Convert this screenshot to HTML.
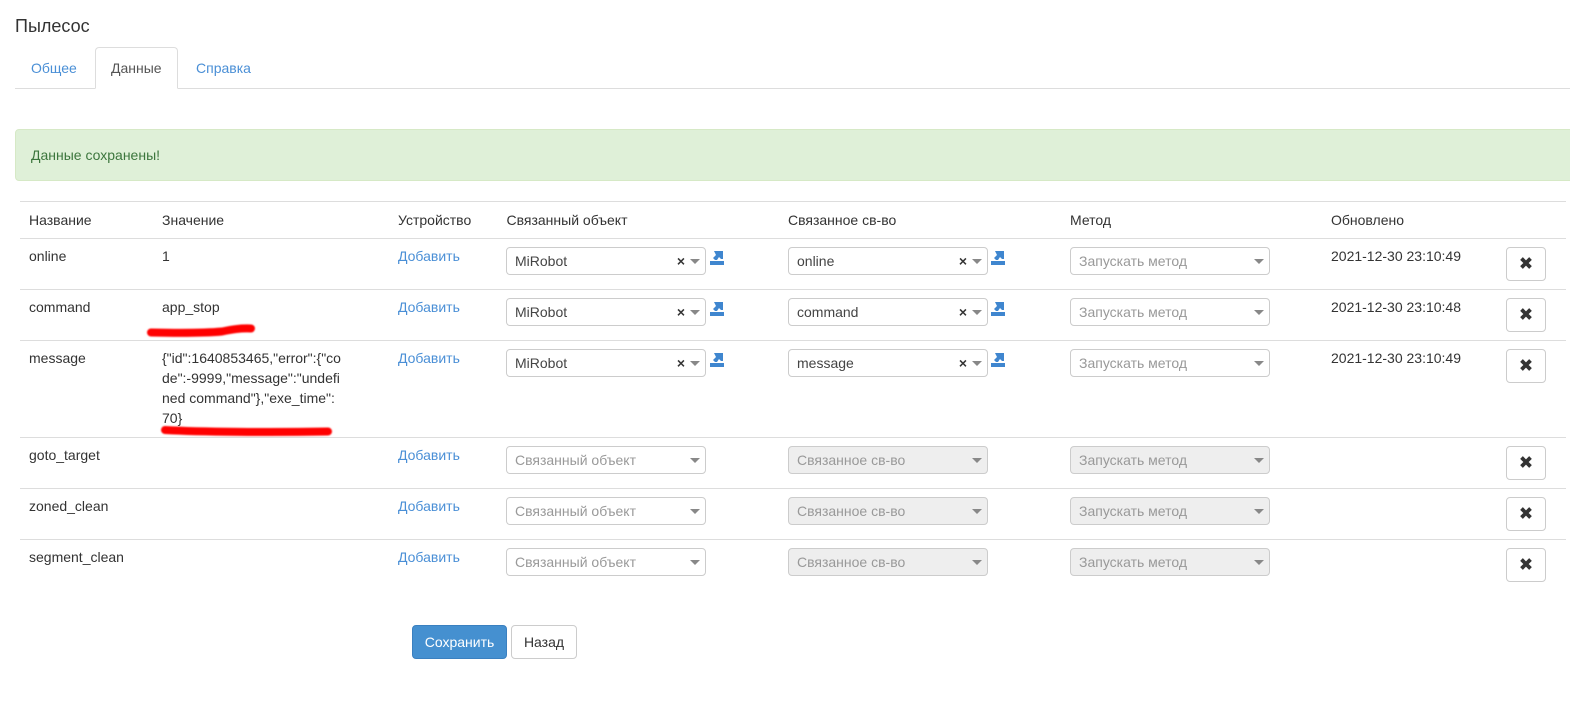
<!DOCTYPE html>
<html lang="ru">
<head>
<meta charset="utf-8">
<title>Пылесос</title>
<style>
html,body{margin:0;padding:0;background:#fff}
body{position:relative;width:1570px;height:726px;overflow:hidden;font-family:"Liberation Sans","Noto Sans CJK SC",sans-serif;font-size:14px;line-height:20px;color:#333}
.t{position:absolute;white-space:nowrap}
.a{color:#4a8fd6}
.l{position:absolute;left:20px;width:1546px;height:1px;background:#ddd}
.s{position:absolute;height:26px;border:1px solid #ccc;border-radius:4px;background:#fff;line-height:27px;padding-left:8px;box-sizing:content-box;width:190px;color:#444}
.s.p{color:#999}
.s.d{background:#eee;color:#999}
.s:after{content:"";position:absolute;right:5px;top:11px;border-left:5px solid transparent;border-right:5px solid transparent;border-top:5px solid #888}
.s i{position:absolute;right:20px;top:0;font-style:normal;font-weight:bold;font-size:14px;color:#333}
.x{position:absolute;left:1506px;width:38px;height:32px;border:1px solid #ccc;border-radius:4px;background:#fff}
.x svg{position:absolute;left:13px;top:9px}
.ic{position:absolute}
</style>
</head>
<body>
<div class="t" style="left:15px;top:16px;font-size:18px;color:#333">Пылесос</div>

<div style="position:absolute;left:15px;top:88px;width:1555px;height:1px;background:#ddd"></div>
<div style="position:absolute;left:95px;top:47px;width:81px;height:40px;border:1px solid #ddd;border-bottom:1px solid #fff;border-radius:4px 4px 0 0;background:#fff"></div>
<div class="t a" style="left:31px;top:58px">Общее</div>
<div class="t" style="left:111px;top:58px;color:#555">Данные</div>
<div class="t a" style="left:196px;top:58px">Справка</div>

<div style="position:absolute;left:15px;top:129px;width:1565px;height:50px;background:#dff0d8;border:1px solid #d6e9c6;border-radius:4px"></div>
<div class="t" style="left:31px;top:145px;color:#3c763d">Данные сохранены!</div>

<div class="l" style="top:201px"></div>
<div class="l" style="top:238px"></div>
<div class="l" style="top:289px"></div>
<div class="l" style="top:340px"></div>
<div class="l" style="top:437px"></div>
<div class="l" style="top:488px"></div>
<div class="l" style="top:539px"></div>

<div class="t" style="left:29px;top:210px">Название</div>
<div class="t" style="left:162px;top:210px">Значение</div>
<div class="t" style="left:398px;top:210px">Устройство</div>
<div class="t" style="left:506.500px;top:210px">Связанный объект</div>
<div class="t" style="left:788px;top:210px">Связанное св-во</div>
<div class="t" style="left:1070px;top:210px">Метод</div>
<div class="t" style="left:1331px;top:210px">Обновлено</div>

<div class="t" style="left:29px;top:246px">online</div>
<div class="t" style="left:162px;top:246px">1</div>
<div class="t a" style="left:398px;top:246px">Добавить</div>
<div class="s" style="left:506px;top:247px">MiRobot<i>×</i></div>
<svg class="ic" style="left:710px;top:251px" width="14" height="14" viewBox="0 0 14 14"><path fill="#3f86cf" d="M0 10h14v4H0zM4 0h9v8H11L9 6 7 9H5L3 7 6 4z"/></svg>
<div class="s" style="left:788px;top:247px">online<i>×</i></div>
<svg class="ic" style="left:991px;top:251px" width="14" height="14" viewBox="0 0 14 14"><path fill="#3f86cf" d="M0 10h14v4H0zM4 0h9v8H11L9 6 7 9H5L3 7 6 4z"/></svg>
<div class="s p" style="left:1070px;top:247px">Запускать метод</div>
<div class="t" style="left:1331px;top:246px">2021-12-30 23:10:49</div>
<div class="x" style="top:247px"><svg width="12" height="12" viewBox="0 0 12 12"><path stroke="#333" stroke-width="3.800" d="M1.500 1.500l9 9M10.500 1.500l-9 9"/></svg></div>

<div class="t" style="left:29px;top:297px">command</div>
<div class="t" style="left:162px;top:297px">app_stop</div>
<div class="t a" style="left:398px;top:297px">Добавить</div>
<div class="s" style="left:506px;top:298px">MiRobot<i>×</i></div>
<svg class="ic" style="left:710px;top:302px" width="14" height="14" viewBox="0 0 14 14"><path fill="#3f86cf" d="M0 10h14v4H0zM4 0h9v8H11L9 6 7 9H5L3 7 6 4z"/></svg>
<div class="s" style="left:788px;top:298px">command<i>×</i></div>
<svg class="ic" style="left:991px;top:302px" width="14" height="14" viewBox="0 0 14 14"><path fill="#3f86cf" d="M0 10h14v4H0zM4 0h9v8H11L9 6 7 9H5L3 7 6 4z"/></svg>
<div class="s p" style="left:1070px;top:298px">Запускать метод</div>
<div class="t" style="left:1331px;top:297px">2021-12-30 23:10:48</div>
<div class="x" style="top:298px"><svg width="12" height="12" viewBox="0 0 12 12"><path stroke="#333" stroke-width="3.800" d="M1.500 1.500l9 9M10.500 1.500l-9 9"/></svg></div>

<div class="t" style="left:29px;top:348px">message</div>
<div class="t" style="left:162px;top:348px">{"id":1640853465,"error":{"co<br>de":-9999,"message":"undefi<br>ned command"},"exe_time":<br>70}</div>
<div class="t a" style="left:398px;top:348px">Добавить</div>
<div class="s" style="left:506px;top:349px">MiRobot<i>×</i></div>
<svg class="ic" style="left:710px;top:353px" width="14" height="14" viewBox="0 0 14 14"><path fill="#3f86cf" d="M0 10h14v4H0zM4 0h9v8H11L9 6 7 9H5L3 7 6 4z"/></svg>
<div class="s" style="left:788px;top:349px">message<i>×</i></div>
<svg class="ic" style="left:991px;top:353px" width="14" height="14" viewBox="0 0 14 14"><path fill="#3f86cf" d="M0 10h14v4H0zM4 0h9v8H11L9 6 7 9H5L3 7 6 4z"/></svg>
<div class="s p" style="left:1070px;top:349px">Запускать метод</div>
<div class="t" style="left:1331px;top:348px">2021-12-30 23:10:49</div>
<div class="x" style="top:349px"><svg width="12" height="12" viewBox="0 0 12 12"><path stroke="#333" stroke-width="3.800" d="M1.500 1.500l9 9M10.500 1.500l-9 9"/></svg></div>

<div class="t" style="left:29px;top:445px">goto_target</div>
<div class="t a" style="left:398px;top:445px">Добавить</div>
<div class="s p" style="left:506px;top:446px">Связанный объект</div>
<div class="s d" style="left:788px;top:446px">Связанное св-во</div>
<div class="s d" style="left:1070px;top:446px">Запускать метод</div>
<div class="x" style="top:446px"><svg width="12" height="12" viewBox="0 0 12 12"><path stroke="#333" stroke-width="3.800" d="M1.500 1.500l9 9M10.500 1.500l-9 9"/></svg></div>

<div class="t" style="left:29px;top:496px">zoned_clean</div>
<div class="t a" style="left:398px;top:496px">Добавить</div>
<div class="s p" style="left:506px;top:497px">Связанный объект</div>
<div class="s d" style="left:788px;top:497px">Связанное св-во</div>
<div class="s d" style="left:1070px;top:497px">Запускать метод</div>
<div class="x" style="top:497px"><svg width="12" height="12" viewBox="0 0 12 12"><path stroke="#333" stroke-width="3.800" d="M1.500 1.500l9 9M10.500 1.500l-9 9"/></svg></div>

<div class="t" style="left:29px;top:547px">segment_clean</div>
<div class="t a" style="left:398px;top:547px">Добавить</div>
<div class="s p" style="left:506px;top:548px">Связанный объект</div>
<div class="s d" style="left:788px;top:548px">Связанное св-во</div>
<div class="s d" style="left:1070px;top:548px">Запускать метод</div>
<div class="x" style="top:548px"><svg width="12" height="12" viewBox="0 0 12 12"><path stroke="#333" stroke-width="3.800" d="M1.500 1.500l9 9M10.500 1.500l-9 9"/></svg></div>

<div class="t" style="left:412px;top:625px;width:93px;height:32px;line-height:32px;text-align:center;background:#4590d0;border:1px solid #3a80c0;border-radius:4px;color:#fff">Сохранить</div>
<div class="t" style="left:511px;top:625px;width:64px;height:32px;line-height:32px;text-align:center;background:#fff;border:1px solid #ccc;border-radius:4px;color:#333">Назад</div>

<svg style="position:absolute;left:0;top:0" width="1570" height="726" viewBox="0 0 1570 726">
<defs><filter id="b" x="-5%" y="-100%" width="110%" height="300%"><feGaussianBlur stdDeviation="0.9"/></filter></defs>
<g fill="none" stroke="#ff0000" stroke-width="8" stroke-linecap="round" stroke-linejoin="round" filter="url(#b)">
<path d="M151 332.500C175 333 205 333 222 331.500C232 329.500 240 328 251 328.500"/>
<path d="M165 430C200 432 270 432.500 328 431.500"/>
</g>
</svg>
</body>
</html>
